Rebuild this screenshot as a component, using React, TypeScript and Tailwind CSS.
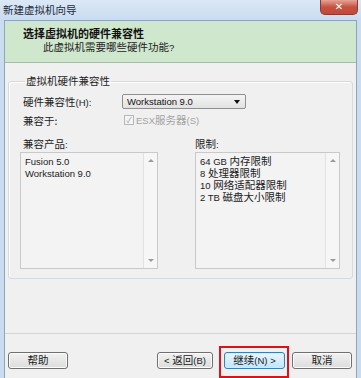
const cjk = "font-['Noto_Sans_CJK_SC',sans-serif]";

function L({ children }: { children: React.ReactNode }) {
  return <span className="font-['Liberation_Sans',sans-serif] text-[9.5px]">{children}</span>;
}

function Button({ children, primary }: { children: React.ReactNode; primary?: boolean }) {
  return (
    <div
      className={
        "flex h-[17px] items-center justify-center rounded-[3px] border text-[10.5px] leading-none text-[#1a1a1a] " +
        (primary
          ? "border-[#3c7fb1] bg-gradient-to-b from-[#eaf6fd] to-[#bee6fd] shadow-[inset_0_0_0_1px_#d3ecfa]"
          : "border-[#707070] bg-gradient-to-b from-[#f2f2f2] to-[#dcdcdc] shadow-[inset_0_0_0_1px_#fbfbfb]")
      }
    >
      {children}
    </div>
  );
}

function ListBox({ width, items }: { width: string; items: React.ReactNode[] }) {
  return (
    <div className={"flex h-[117px] border border-[#c9c9c9] bg-[#f3f3f3] " + width}>
      <div className="flex flex-1 flex-col px-[4px] pt-[2px] text-[10.5px] leading-[12px] text-[#222]">
        {items.map((it, i) => (
          <div key={i} className="h-[12px] overflow-visible whitespace-nowrap">
            {it}
          </div>
        ))}
      </div>
      <div className="flex w-[14px] flex-col items-center justify-between border-l border-[#e2e2e2] bg-[#f6f6f6] py-[6px]">
        <div className="h-0 w-0 border-x-[3px] border-b-[3px] border-x-transparent border-b-[#9a9a9a]" />
        <div className="h-0 w-0 border-x-[3px] border-t-[3px] border-x-transparent border-t-[#9a9a9a]" />
      </div>
    </div>
  );
}

export default function App() {
  return (
    <div className={"relative flex h-[378px] w-[361px] flex-col overflow-hidden bg-[#c9dcf0] " + cjk}>
      {/* title bar */}
      <div className="flex h-[20px] items-start justify-between bg-gradient-to-b from-[#dbe8f6] to-[#c9dcf0]">
        <span className="ml-[3px] mt-[3px] text-[10.5px] leading-[13px] text-[#1e2a3a]">新建虚拟机向导</span>
        <div className="mr-[3px] flex h-[15px] w-[38px] items-center justify-center rounded-b-[5px] border border-t-0 border-[#8a3a3a] bg-gradient-to-b from-[#e4a396] via-[#c8503f] to-[#c04a3a]">
          <span className="font-['DejaVu_Sans',sans-serif] text-[10px] font-bold leading-none text-white">✕</span>
        </div>
      </div>

      {/* client */}
      <div className="mx-[4px] flex flex-1 flex-col border border-b-0 border-[#8fa5bd] bg-[#f0f0f0]">
        <div className="flex h-[42px] flex-col border-b border-[#a9b9a9] bg-[#cfe7cd] pl-[18px] pt-[5px]">
          <div className="text-[11px] font-bold leading-[14px] text-[#111]">选择虚拟机的硬件兼容性</div>
          <div className="ml-[20px] text-[10.5px] leading-[14px] text-[#222]">
            此虚拟机需要哪些硬件功能<L>?</L>
          </div>
        </div>

        <div className="flex flex-1 flex-col px-[3px]">
          <fieldset className="mt-[12px] rounded-[3px] border border-[#d5dadf] pb-[9px] pl-[11px] shadow-[inset_1px_1px_0_#fff]">
            <legend className="ml-[5px] px-[1px] text-[10.5px] leading-[12px] text-[#222]">虚拟机硬件兼容性</legend>
            <div className="mt-[7px] flex items-center text-[10.5px] leading-[13px] text-[#222]">
              <div className="w-[102px] pl-[3px]">
                硬件兼容性<L>(H):</L>
              </div>
              <div className="flex h-[15px] w-[124px] items-center justify-between rounded-[2px] border border-[#8e8f8f] bg-gradient-to-b from-[#f4f4f4] to-[#e2e2e2] pl-[4px] pr-[5px]">
                <span className="font-['Liberation_Sans',sans-serif] text-[9.5px] leading-none text-[#111]">Workstation 9.0</span>
                <div className="h-0 w-0 border-x-[3px] border-t-[4px] border-x-transparent border-t-[#111]" />
              </div>
            </div>
            <div className="mt-[4px] flex items-center text-[10.5px] leading-[13px] text-[#222]">
              <div className="w-[102px] pl-[3px]">兼容于:</div>
              <div className="ml-[2px] flex items-center gap-[2px] text-[#a3a3a3]">
                <div className="flex h-[10px] w-[10px] items-center justify-center border border-[#b8b8b8] bg-[#f4f4f4] text-[8px] leading-none text-[#9aa0a6]">
                  ✓
                </div>
                <span>
                  <L>ESX</L>服务器<L>(S)</L>
                </span>
              </div>
            </div>
            <div className="mt-[10px] flex text-[10.5px] leading-[13px] text-[#222]">
              <div className="w-[175px] pl-[3px]">
                兼容产品<L>:</L>
              </div>
              <div>
                限制<L>:</L>
              </div>
            </div>
            <div className="mt-[1px] flex gap-[37px]">
              <ListBox width="w-[138px]" items={[<L>Fusion 5.0</L>, <L>Workstation 9.0</L>]} />
              <ListBox
                width="w-[145px]"
                items={[
                  <>
                    <L>64 GB&nbsp;</L>内存限制
                  </>,
                  <>
                    <L>8&nbsp;</L>处理器限制
                  </>,
                  <>
                    <L>10&nbsp;</L>网络适配器限制
                  </>,
                  <>
                    <L>2 TB&nbsp;</L>磁盘大小限制
                  </>,
                ]}
              />
            </div>
          </fieldset>
        </div>

        <div className="mt-auto border-t border-[#d5d5d5] shadow-[inset_0_1px_0_#fff]" />
        <div className="mb-[9px] mt-[18px] flex items-center px-[3px]">
          <div className="w-[60px]">
            <Button>帮助</Button>
          </div>
          <div className="ml-auto w-[56px]">
            <Button>
              <L>&lt;&nbsp;</L>返回<L>(B)</L>
            </Button>
          </div>
          <div className="ml-[11px] w-[61px]">
            <Button primary>
              继续<L>(N)&nbsp;&gt;</L>
            </Button>
          </div>
          <div className="ml-[7px] mr-[1px] w-[60px]">
            <Button>取消</Button>
          </div>
        </div>
      </div>

      {/* annotation highlight */}
      <div className="absolute left-[219px] top-[346px] h-[32px] w-[70px] border-2 border-[#e0101a]" />
    </div>
  );
}
